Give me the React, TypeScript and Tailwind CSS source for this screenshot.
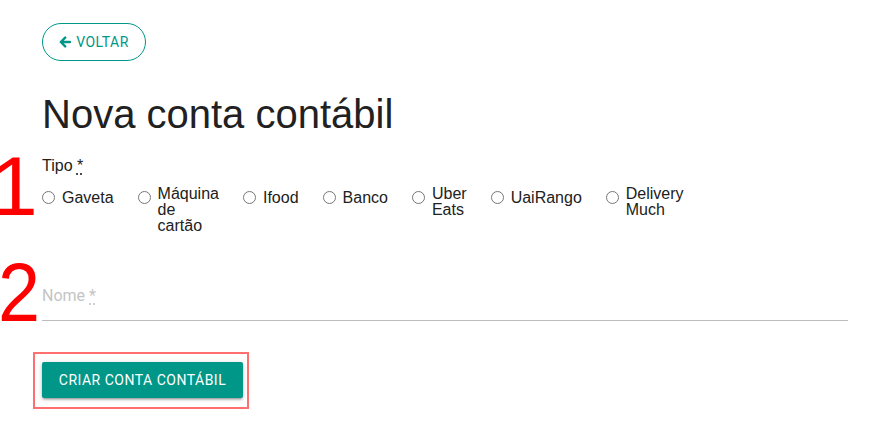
import { useState } from "react";

const tipos = [
  { id: "gaveta", label: "Gaveta", lines: 1 },
  { id: "maquina", label: "Máquina de cartão", lines: 3 },
  { id: "ifood", label: "Ifood", lines: 1 },
  { id: "banco", label: "Banco", lines: 1 },
  { id: "uber", label: "Uber Eats", lines: 2 },
  { id: "uairango", label: "UaiRango", lines: 1 },
  { id: "delivery", label: "Delivery Much", lines: 2 },
];

function ArrowLeft() {
  return (
    <svg width="12" height="12" viewBox="0 0 12 12" fill="none" className="shrink-0">
      <path
        d="M6.2 1.6 L1.8 6 L6.2 10.4 M2 6 H11"
        stroke="currentColor"
        strokeWidth="2.4"
        strokeLinecap="round"
        strokeLinejoin="round"
      />
    </svg>
  );
}

export default function App() {
  const [tipo, setTipo] = useState<string | null>(null);
  const [nome, setNome] = useState("");

  return (
    <div className="relative min-h-[443px] w-full bg-white pl-[42px] pr-[21px] pt-[23px] font-['Liberation_Sans',Arial,sans-serif] text-[#212121]">
      {/* annotation marks */}
      <div
        aria-hidden
        className="pointer-events-none absolute left-[-9px] top-[144px] text-[84px] leading-none text-[#ff0000]"
      >
        1
      </div>
      <div
        aria-hidden
        className="pointer-events-none absolute left-[-2px] top-[250px] origin-left scale-x-[0.9] text-[84px] leading-none text-[#ff0000]"
      >
        2
      </div>

      <button className="flex h-[38px] w-[104px] items-center justify-center gap-[5px] rounded-full border border-[#009688] font-['Roboto',sans-serif] text-[14px] uppercase tracking-[0.5px] text-[#009688]">
        <ArrowLeft />
        Voltar
      </button>

      <h1 className="mt-[29px] text-[40px] leading-[48px] text-[#212121]">Nova conta contábil</h1>

      <div className="mt-4 text-[16px] leading-6">
        Tipo <abbr title="obrigatório" className="no-underline">
          <span className="underline decoration-dotted underline-offset-[3px]">*</span>
        </abbr>
      </div>

      <div className="mt-2 flex items-start gap-6 text-[16px] leading-4">
        {tipos.map((t) => (
          <label key={t.id} className="flex cursor-pointer items-start gap-[7px]">
            <input
              type="radio"
              name="tipo"
              checked={tipo === t.id}
              onChange={() => setTipo(t.id)}
              className="m-0 mt-[5px] h-[13px] w-[13px] shrink-0 accent-[#009688]"
            />
            <span className={t.lines === 1 ? "mt-1 w-min" : "w-min"}>{t.label}</span>
          </label>
        ))}
      </div>

      <label className="mt-[50px] block border-b border-[#bdbdbd] pb-[12px] font-['Roboto',sans-serif] text-[16px] leading-6">
        <input
          value={nome}
          onChange={(e) => setNome(e.target.value)}
          placeholder="Nome *"
          className="hidden"
        />
        <span className="text-[#c4c4c4]">
          Nome <span className="underline decoration-dotted underline-offset-[3px]">*</span>
        </span>
      </label>

      <div className="relative mt-[41px] w-fit">
        <div className="pointer-events-none absolute -bottom-[11px] -left-[9px] -right-[6px] -top-[10px] border-2 border-[#ff6f6f]" />
        <button className="h-9 w-[201px] rounded-[2px] bg-[#009688] font-['Roboto',sans-serif] text-[14px] uppercase tracking-[0.5px] text-white shadow-[0_2px_2px_0_rgba(0,0,0,0.14),0_3px_1px_-2px_rgba(0,0,0,0.12),0_1px_5px_0_rgba(0,0,0,0.2)]">
          Criar conta contábil
        </button>
      </div>
    </div>
  );
}
